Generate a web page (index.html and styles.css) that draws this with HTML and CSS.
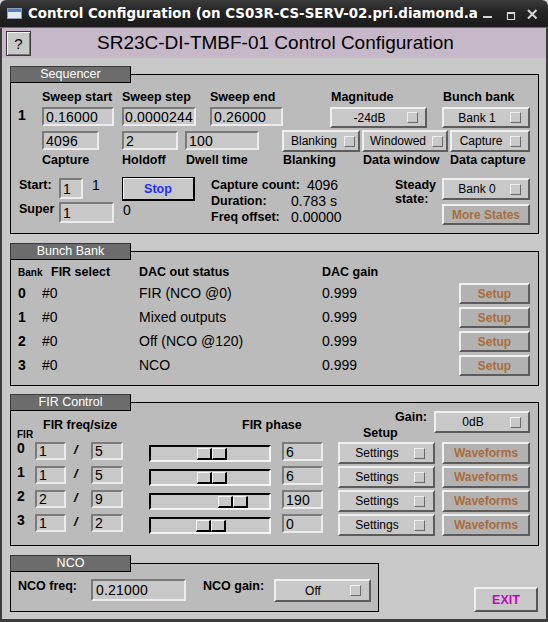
FILE: index.html
```html
<!DOCTYPE html>
<html>
<head>
<meta charset="utf-8">
<title>Control Configuration</title>
<link rel="stylesheet" href="styles.css">
</head>
<body>
<div class="window">
  <div class="titlebar">
    <svg class="app-icon" width="15" height="11" viewBox="0 0 15 11">
      <rect x="0.5" y="0.5" width="14" height="10" fill="#e4eaf2" stroke="#8e9db0"/>
      <rect x="1" y="1" width="13" height="3" fill="#4f7fcf"/>
    </svg>
    <div class="title-text">Control Configuration (on CS03R-CS-SERV-02.pri.diamond.a</div>
    <div class="wm-buttons">
      <svg class="wm-min" width="10" height="12" viewBox="0 0 10 12"><rect x="0" y="8" width="9" height="2" fill="#d6d6d6"/></svg>
      <svg class="wm-max" width="10" height="12" viewBox="0 0 10 12"><path d="M1.5 4.5h7v7h-7z" fill="none" stroke="#d6d6d6" stroke-width="1.2"/><rect x="1" y="4" width="8" height="2" fill="#d6d6d6"/></svg>
      <svg class="wm-close" width="11" height="12" viewBox="0 0 11 12"><path d="M1 2L9.5 10.5M9.5 2L1 10.5" stroke="#d6d6d6" stroke-width="2"/></svg>
    </div>
  </div>

  <div class="client">
    <div class="header">
      <div class="help-btn">?</div>
      <div class="header-title">SR23C-DI-TMBF-01 Control Configuration</div>
    </div>

    <div class="content">
      <!-- Sequencer -->
      <section class="group seq">
        <div class="legend">Sequencer</div>
        <div class="row seq-a">
          <span class="lbl w80">Sweep start</span>
          <span class="lbl w88">Sweep step</span>
          <span class="lbl w121">Sweep end</span>
          <span class="lbl w112">Magnitude</span>
          <span class="lbl">Bunch bank</span>
        </div>
        <div class="row seq-b">
          <span class="rownum seq-num">1</span>
          <div class="field f-sw1">0.16000</div>
          <div class="field f-sw2">0.0000244</div>
          <div class="field f-sw3">0.26000</div>
          <div class="menu m-mag"><span class="mtxt">-24dB</span><span class="ind"></span></div>
          <div class="menu m-bank1"><span class="mtxt">Bank 1</span><span class="ind"></span></div>
        </div>
        <div class="row seq-c">
          <div class="field f-cap">4096</div>
          <div class="field f-hold">2</div>
          <div class="field f-dwell">100</div>
          <div class="menu m-blank"><span class="mtxt">Blanking</span><span class="ind"></span></div>
          <div class="menu m-win"><span class="mtxt">Windowed</span><span class="ind"></span></div>
          <div class="menu m-capt"><span class="mtxt">Capture</span><span class="ind"></span></div>
        </div>
        <div class="row seq-d">
          <span class="lbl w80">Capture</span>
          <span class="lbl w64">Holdoff</span>
          <span class="lbl w97">Dwell time</span>
          <span class="lbl w80">Blanking</span>
          <span class="lbl w87">Data window</span>
          <span class="lbl">Data capture</span>
        </div>
        <div class="row seq-e">
          <div class="start-col">
            <div class="start-line">
              <span class="lbl s-lbl">Start:</span>
              <div class="field f-start">1</div>
              <span class="val s-val">1</span>
            </div>
            <div class="start-line super-line">
              <span class="lbl s-lbl">Super</span>
              <div class="field f-super">1</div>
            </div>
          </div>
          <div class="stop-col">
            <div class="stop-btn">Stop</div>
            <span class="val stop-val">0</span>
          </div>
          <div class="info-col">
            <div class="info-line"><span class="lbl info-lbl">Capture count:</span><span class="val info-first">4096</span></div>
            <div class="info-line"><span class="lbl info-lbl">Duration:</span><span class="val">0.783 s</span></div>
            <div class="info-line"><span class="lbl info-lbl">Freq offset:</span><span class="val">0.00000</span></div>
          </div>
          <div class="steady-col lbl">Steady<br>state:</div>
          <div class="btn-col">
            <div class="menu m-bank0"><span class="mtxt">Bank 0</span><span class="ind"></span></div>
            <div class="msg more-btn">More States</div>
          </div>
        </div>
      </section>

      <!-- Bunch Bank -->
      <section class="group bunch">
        <div class="legend">Bunch Bank</div>
        <div class="row bb-head">
          <span class="lbl small bb-c1">Bank</span>
          <span class="lbl bb-c2">FIR select</span>
          <span class="lbl bb-c3">DAC out status</span>
          <span class="lbl">DAC gain</span>
        </div>
        <div class="row bb-row">
          <span class="rownum bb-c1n">0</span><span class="val bb-c2">#0</span><span class="val bb-c3">FIR (NCO @0)</span><span class="val bb-c4">0.999</span><div class="msg setup-btn">Setup</div>
        </div>
        <div class="row bb-row">
          <span class="rownum bb-c1n">1</span><span class="val bb-c2">#0</span><span class="val bb-c3">Mixed outputs</span><span class="val bb-c4">0.999</span><div class="msg setup-btn">Setup</div>
        </div>
        <div class="row bb-row">
          <span class="rownum bb-c1n">2</span><span class="val bb-c2">#0</span><span class="val bb-c3">Off (NCO @120)</span><span class="val bb-c4">0.999</span><div class="msg setup-btn">Setup</div>
        </div>
        <div class="row bb-row">
          <span class="rownum bb-c1n">3</span><span class="val bb-c2">#0</span><span class="val bb-c3">NCO</span><span class="val bb-c4">0.999</span><div class="msg setup-btn">Setup</div>
        </div>
      </section>

      <!-- FIR Control -->
      <section class="group fir">
        <div class="legend">FIR Control</div>
        <div class="row fir-head">
          <span class="lbl small fh-fir">FIR</span>
          <span class="lbl fh-freq">FIR freq/size</span>
          <span class="lbl fh-phase">FIR phase</span>
          <span class="lbl fh-setup">Setup</span>
          <span class="lbl fh-gain">Gain:</span>
          <div class="menu m-gain"><span class="mtxt">0dB</span><span class="ind"></span></div>
        </div>
        <div class="row fir-row">
          <span class="rownum fr-num">0</span>
          <div class="field f-fq">1</div><span class="slash">/</span><div class="field f-fs">5</div>
          <div class="slider"><div class="thumb" style="margin-left:46px"><span></span><span></span></div></div>
          <div class="field f-ph">6</div>
          <div class="menu m-set"><span class="mtxt">Settings</span><span class="ind"></span></div>
          <div class="msg wave-btn">Waveforms</div>
        </div>
        <div class="row fir-row">
          <span class="rownum fr-num">1</span>
          <div class="field f-fq">1</div><span class="slash">/</span><div class="field f-fs">5</div>
          <div class="slider"><div class="thumb" style="margin-left:46px"><span></span><span></span></div></div>
          <div class="field f-ph">6</div>
          <div class="menu m-set"><span class="mtxt">Settings</span><span class="ind"></span></div>
          <div class="msg wave-btn">Waveforms</div>
        </div>
        <div class="row fir-row">
          <span class="rownum fr-num">2</span>
          <div class="field f-fq">2</div><span class="slash">/</span><div class="field f-fs">9</div>
          <div class="slider"><div class="thumb" style="margin-left:67px"><span></span><span></span></div></div>
          <div class="field f-ph">190</div>
          <div class="menu m-set"><span class="mtxt">Settings</span><span class="ind"></span></div>
          <div class="msg wave-btn">Waveforms</div>
        </div>
        <div class="row fir-row">
          <span class="rownum fr-num">3</span>
          <div class="field f-fq">1</div><span class="slash">/</span><div class="field f-fs">2</div>
          <div class="slider"><div class="thumb" style="margin-left:45px"><span></span><span></span></div></div>
          <div class="field f-ph">0</div>
          <div class="menu m-set"><span class="mtxt">Settings</span><span class="ind"></span></div>
          <div class="msg wave-btn">Waveforms</div>
        </div>
      </section>

      <div class="bottom-row">
        <section class="group nco">
          <div class="legend">NCO</div>
          <div class="row nco-row">
            <span class="lbl nco-lbl1">NCO freq:</span>
            <div class="field f-nco">0.21000</div>
            <span class="lbl nco-lbl2">NCO gain:</span>
            <div class="menu m-nco"><span class="mtxt">Off</span><span class="ind"></span></div>
          </div>
        </section>
        <div class="exit-btn">EXIT</div>
      </div>
    </div>
  </div>
</div>
</body>
</html>
```

FILE: styles.css
```css
* { box-sizing: border-box; }
html, body { margin: 0; padding: 0; background: #d9d9d9; }
body { font-family: "Liberation Sans", Arial, sans-serif; color: #000; }

.window { width: 548px; height: 622px; display: flex; flex-direction: column; overflow: hidden; }

/* ---------- title bar ---------- */
.titlebar {
  height: 28px; flex: none; display: flex; align-items: center;
  background: linear-gradient(#3b3b3b, #242424 45%, #1a1a1a);
  border-radius: 6px 6px 0 0; border-bottom: 1px solid #5c6b7d;
  padding-left: 7px; color: #fff;
}
.app-icon { flex: none; margin-right: 6px; }
.title-text {
  font-family: "DejaVu Sans", sans-serif; font-weight: bold; font-size: 13.4px;
  white-space: nowrap; overflow: hidden; width: 452px; flex: none;
}
.wm-buttons { display: flex; align-items: center; }
.wm-min { margin-left: 3px; }
.wm-max { margin-left: 13px; }
.wm-close { margin-left: 11px; }

/* ---------- client ---------- */
.client {
  flex: 1; display: flex; flex-direction: column; background: #c8c8c8;
  border-left: 2px solid #3c3c3c; border-right: 2px solid #3c3c3c; border-bottom: 3px solid #3c3c3c;
}
.header { height: 30px; flex: none; display: flex; align-items: center; background: #c6b7c9; padding-left: 4px; }
.help-btn {
  width: 25px; height: 25px; display: flex; align-items: center; justify-content: center;
  background: #c8c8c8; border: 1px solid #3a3a3a; box-shadow: inset 1px 1px 0 #f2f2f2, inset -1px -1px 0 #777;
  font-size: 15px;
}
.header-title { margin-left: 66px; font-size: 19px; white-space: nowrap; }

.content { padding: 0 8px; }

/* ---------- group boxes ---------- */
.group { position: relative; border: 1px solid #000; background: #bbbbbb; width: 529px; }
.legend {
  position: absolute; left: -1px; top: -9px; width: 121px; height: 17px;
  background: #6c6c6c; color: #fff; font-size: 12.5px; line-height: 15px; text-align: center;
  border: 1px solid; border-color: #3a3a3a #000 #000 #3a3a3a;
}
.row { display: flex; }
.lbl { font-weight: bold; font-size: 12.5px; line-height: 14px; white-space: nowrap; }
.lbl.small { font-size: 10px; }
.val { font-size: 14px; line-height: 16px; white-space: nowrap; }
.rownum { font-weight: bold; font-size: 14px; line-height: 14px; }

.w64 { width: 64px; flex: none; } .w80 { width: 80px; flex: none; } .w87 { width: 87px; flex: none; }
.w88 { width: 88px; flex: none; } .w97 { width: 97px; flex: none; } .w112 { width: 112px; flex: none; }
.w121 { width: 121px; flex: none; }

/* widgets */
.field {
  flex: none; height: 19px; display: flex; align-items: center; padding-left: 2px;
  background: #c8c8c8; border: 2px solid; border-color: #7a7a7a #ececec #ececec #7a7a7a;
  font-size: 14px; letter-spacing: 0.2px; white-space: nowrap; overflow: hidden;
}
.menu {
  flex: none; display: flex; align-items: center; background: #c8c8c8;
  border: 2px solid; border-color: #f0f0f0 #5c5c5c #5c5c5c #f0f0f0; font-size: 12px; white-space: nowrap;
}
.menu .mtxt { flex: 1; text-align: center; }
.menu .ind {
  flex: none; width: 11px; height: 11px; margin-right: 7px;
  border: 1px solid; border-color: #f0f0f0 #6a6a6a #6a6a6a #f0f0f0;
}
.msg {
  flex: none; display: flex; align-items: center; justify-content: center;
  background: #b2b2b2; border: 2px solid; border-color: #f0f0f0 #5c5c5c #5c5c5c #f0f0f0;
  color: #a86d3b; font-weight: bold; font-size: 12px; white-space: nowrap;
}

/* ---------- sequencer ---------- */
.seq { margin-top: 16px; height: 160px; padding-top: 13px; }
.seq-a { height: 17px; align-items: center; padding-left: 31px; }
.seq-b { margin-top: 1px; height: 21px; align-items: flex-start; }
.seq-num { width: 24px; margin-left: 7px; line-height: 19px; }
.f-sw1 { width: 72px; margin-top: 1px; }
.f-sw2 { width: 74px; margin-top: 1px; margin-left: 8px; padding-left: 1px; }
.f-sw3 { width: 73px; margin-top: 1px; margin-left: 14px; }
.m-mag { width: 97px; height: 21px; margin-top: 1px; margin-left: 47px; }
.m-bank1 { width: 88px; height: 21px; margin-top: 1px; margin-left: 15px; }

.seq-c { margin-top: 3px; height: 22px; align-items: flex-start; }
.f-cap { width: 57px; margin-top: 1px; margin-left: 31px; }
.f-hold { width: 56px; margin-top: 1px; margin-left: 23px; }
.f-dwell { width: 74px; margin-top: 1px; margin-left: 7px; }
.m-blank { width: 78px; height: 22px; margin-left: 23px; }
.m-blank .ind, .m-win .ind { margin-right: 3px; }
.m-win { width: 86px; height: 22px; margin-left: 2px; }
.m-capt { width: 80px; height: 22px; margin-left: 2px; }

.seq-d { height: 16px; align-items: center; padding-left: 31px; }

.seq-e { margin-top: 9px; align-items: flex-start; }
.start-col { width: 103px; margin-left: 8px; flex: none; }
.start-line { display: flex; align-items: flex-start; height: 22px; }
.super-line { margin-top: 3px; }
.s-lbl { width: 40px; line-height: 16px; flex: none; }
.f-start { width: 24px; height: 21px; margin-top: 1px; }
.f-super { width: 55px; height: 21px; }
.super-line .s-lbl { line-height: 15px; }
.s-val { margin-left: 9px; }
.stop-col { width: 73px; flex: none; display: flex; flex-direction: column; }
.stop-btn {
  height: 24px; display: flex; align-items: center; justify-content: center;
  background: #c8c8c8; border: 1px solid #000; border-width: 1px 2px 2px 1px;
  box-shadow: inset 1px 1px 0 #f4f4f4; color: #1f2cff; font-weight: bold; font-size: 12.5px;
}
.stop-val { margin-top: 1px; margin-left: 1px; }
.info-col { width: 184px; margin-left: 16px; flex: none; }
.info-line { display: flex; height: 16px; align-items: center; }
.info-lbl { width: 80px; flex: none; }
.info-first { margin-left: 16px; }
.steady-col { width: 47px; flex: none; margin-top: 1px; }
.btn-col { width: 88px; flex: none; display: flex; flex-direction: column; }
.m-bank0 { height: 22px; margin-top: 1px; }
.more-btn { height: 21px; margin-top: 4px; }

/* ---------- bunch bank ---------- */
.bunch { margin-top: 17px; height: 135px; padding-top: 13px; }
.bb-head { height: 14px; align-items: baseline; }
.bb-c1 { width: 33px; margin-left: 7px; flex: none; }
.bb-c1n { width: 24px; margin-left: 7px; flex: none; }
.bb-c2 { width: 88px; flex: none; }
.bb-row .bb-c2 { width: 97px; }
.bb-c3 { width: 183px; flex: none; }
.bb-c4 { width: 137px; flex: none; }
.bb-row { height: 21px; align-items: center; margin-top: 3px; }
.bb-head + .bb-row { margin-top: 4px; }
.bb-row > span { margin-bottom: 2px; }
.setup-btn { width: 71px; height: 21px; }

/* ---------- FIR control ---------- */
.fir { margin-top: 16px; height: 144px; }
.fir-head { height: 39px; align-items: flex-start; }
.fh-fir { width: 26px; margin-left: 6px; margin-top: 25px; flex: none; }
.fh-freq { width: 199px; margin-top: 15px; flex: none; }
.fh-phase { width: 121px; margin-top: 15px; flex: none; }
.fh-setup { width: 32px; margin-top: 23px; flex: none; }
.fh-gain { width: 39px; margin-top: 7px; flex: none; }
.m-gain { width: 96px; height: 22px; margin-top: 8px; }
.fir-row { height: 22px; margin-bottom: 2px; align-items: flex-start; }
.fr-num { width: 18px; margin-left: 6px; margin-top: 0; line-height: 13px; flex: none; }
.f-fq { width: 31px; height: 18px; }
.slash { width: 17px; margin-left: 8px; flex: none; font-weight: bold; font-style: italic; font-size: 13px; line-height: 14px; margin-top: 1px; }
.f-fs { width: 32px; height: 18px; }
.slider {
  flex: none; width: 122px; height: 17px; margin-left: 26px; margin-top: 3px;
  display: flex; align-items: center; background: #c8c8c8;
  border: 2px solid; border-color: #000 #f4f4f4 #f4f4f4 #000;
}
.thumb { display: flex; height: 12px; margin-top: 1px; }
.thumb span {
  width: 15px; height: 12px; background: #c8c8c8;
  border-style: solid; border-width: 1px 2px 2px 1px; border-color: #f4f4f4 #000 #000 #f4f4f4;
}
.f-ph { width: 41px; height: 19px; margin-left: 11px; }
.m-set { width: 97px; height: 22px; margin-left: 15px; }
.m-set .ind { margin-right: 8px; }
.wave-btn { width: 88px; height: 22px; margin-left: 7px; }

/* ---------- NCO + exit ---------- */
.bottom-row { display: flex; align-items: flex-end; margin-top: 17px; }
.nco { width: 369px; height: 49px; padding-top: 15px; }
.nco-row { align-items: flex-start; }
.nco-lbl1 { width: 73px; margin-left: 7px; flex: none; margin-top: 0; }
.f-nco { width: 95px; height: 22px; padding-left: 3px; }
.nco-lbl2 { width: 71px; margin-left: 17px; flex: none; }
.m-nco { width: 97px; height: 23px; }
.m-nco .ind { margin-right: 8px; }
.exit-btn {
  width: 64px; height: 25px; margin-left: 95px; display: flex; align-items: center; justify-content: center;
  background: #c8c8c8; border: 2px solid; border-color: #f0f0f0 #555 #555 #f0f0f0;
  color: #c800c8; font-weight: bold; font-size: 12.5px;
}
```
